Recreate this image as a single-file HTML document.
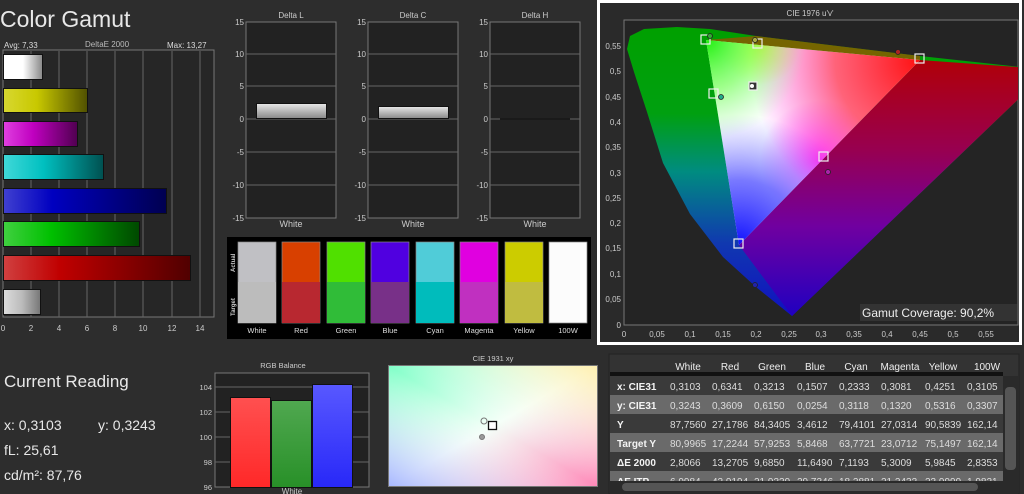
<!DOCTYPE html>
<html><head><meta charset="utf-8"><style>
html,body{margin:0;padding:0;background:#2d2d2d;width:1024px;height:494px;overflow:hidden}
svg{display:block;font-family:"Liberation Sans",sans-serif}
</style></head><body>
<svg width="1024" height="494" viewBox="0 0 1024 494" xmlns="http://www.w3.org/2000/svg">
<defs>
<linearGradient id="gw" x1="0" x2="1"><stop offset="0" stop-color="#fff"/><stop offset=".5" stop-color="#fff"/><stop offset="1" stop-color="#888"/></linearGradient>
<linearGradient id="gy" x1="0" x2="1"><stop offset="0" stop-color="#d8d830"/><stop offset=".4" stop-color="#c8c800"/><stop offset="1" stop-color="#505000"/></linearGradient>
<linearGradient id="gm" x1="0" x2="1"><stop offset="0" stop-color="#e040e0"/><stop offset=".4" stop-color="#c000c0"/><stop offset="1" stop-color="#500050"/></linearGradient>
<linearGradient id="gc" x1="0" x2="1"><stop offset="0" stop-color="#40d8d8"/><stop offset=".4" stop-color="#00c0c0"/><stop offset="1" stop-color="#005050"/></linearGradient>
<linearGradient id="gb" x1="0" x2="1"><stop offset="0" stop-color="#4040d0"/><stop offset=".3" stop-color="#0000c0"/><stop offset="1" stop-color="#000050"/></linearGradient>
<linearGradient id="gg" x1="0" x2="1"><stop offset="0" stop-color="#40d040"/><stop offset=".35" stop-color="#00c000"/><stop offset="1" stop-color="#004800"/></linearGradient>
<linearGradient id="gr" x1="0" x2="1"><stop offset="0" stop-color="#d04040"/><stop offset=".3" stop-color="#c00000"/><stop offset="1" stop-color="#500000"/></linearGradient>
<linearGradient id="gs" x1="0" x2="1"><stop offset="0" stop-color="#ddd"/><stop offset=".5" stop-color="#bbb"/><stop offset="1" stop-color="#777"/></linearGradient>
<linearGradient id="gd" x1="0" y1="0" x2="0" y2="1"><stop offset="0" stop-color="#e8e8e8"/><stop offset="1" stop-color="#888"/></linearGradient>
<linearGradient id="hs" x1="0" y1="0" x2="0" y2="1"><stop offset="0" stop-color="#00a000"/><stop offset=".3" stop-color="#00a010"/><stop offset=".5" stop-color="#008c80"/><stop offset=".75" stop-color="#1038b0"/><stop offset="1" stop-color="#1010c0"/></linearGradient>
<linearGradient id="hr" x1="0" y1="0" x2="0" y2="1"><stop offset="0" stop-color="#b00008"/><stop offset=".35" stop-color="#980050"/><stop offset=".65" stop-color="#7000a0"/><stop offset="1" stop-color="#2000c0"/></linearGradient>
<radialGradient id="tR" cx="920" cy="60" r="170" gradientUnits="userSpaceOnUse"><stop offset="0" stop-color="#ff1010"/><stop offset=".5" stop-color="#ff2040" stop-opacity=".7"/><stop offset="1" stop-color="#ff00ff" stop-opacity="0"/></radialGradient>
<radialGradient id="tG" cx="706" cy="40" r="100" gradientUnits="userSpaceOnUse"><stop offset="0" stop-color="#20f010"/><stop offset=".5" stop-color="#60ff40" stop-opacity=".6"/><stop offset="1" stop-color="#80ff80" stop-opacity="0"/></radialGradient>
<radialGradient id="tB" cx="739" cy="245" r="130" gradientUnits="userSpaceOnUse"><stop offset="0" stop-color="#1010ff"/><stop offset=".5" stop-color="#4040ff" stop-opacity=".7"/><stop offset="1" stop-color="#8080ff" stop-opacity="0"/></radialGradient>
<radialGradient id="tM" cx="820" cy="160" r="60" gradientUnits="userSpaceOnUse"><stop offset="0" stop-color="#ff10ff" stop-opacity=".8"/><stop offset="1" stop-color="#ff40ff" stop-opacity="0"/></radialGradient>
<radialGradient id="tY" cx="760" cy="45" r="40" gradientUnits="userSpaceOnUse"><stop offset="0" stop-color="#ffff20" stop-opacity=".8"/><stop offset="1" stop-color="#ffff40" stop-opacity="0"/></radialGradient>
<linearGradient id="c1" x1="0" y1="0" x2="1" y2="1"><stop offset="0" stop-color="#80ffc8"/><stop offset=".5" stop-color="#f4fff8"/><stop offset="1" stop-color="#ff88b8"/></linearGradient>
<linearGradient id="c2" x1="1" y1="0" x2="0" y2="1"><stop offset="0" stop-color="#fff0b0"/><stop offset=".5" stop-color="#ffffff" stop-opacity="0"/><stop offset="1" stop-color="#a8b8ff"/></linearGradient>
<linearGradient id="rb" x1="0" y1="0" x2="0" y2="1"><stop offset="0" stop-color="#ff5050"/><stop offset="1" stop-color="#ff2828"/></linearGradient>
<linearGradient id="gbb" x1="0" y1="0" x2="0" y2="1"><stop offset="0" stop-color="#50a850"/><stop offset="1" stop-color="#289028"/></linearGradient>
<linearGradient id="bb" x1="0" y1="0" x2="0" y2="1"><stop offset="0" stop-color="#5858ff"/><stop offset="1" stop-color="#2828f8"/></linearGradient>
<clipPath id="cp"><rect x="624" y="20" width="394" height="305"/></clipPath>
<clipPath id="tc"><rect x="610" y="471" width="393" height="10"/></clipPath>
</defs>

<text x="0" y="27" font-size="23" fill="#e8e8e8">Color Gamut</text>
<text x="4" y="48" font-size="8" fill="#ddd">Avg: 7,33</text>
<text x="85" y="47" font-size="8" fill="#bbb">DeltaE 2000</text>
<text x="167" y="48" font-size="8" fill="#ddd">Max: 13,27</text>
<rect x="3" y="50" width="211" height="267" fill="#262626" stroke="#777" stroke-width="1"/>
<g stroke="#666" stroke-width="1">
<line x1="31" y1="51" x2="31" y2="317"/><line x1="59" y1="51" x2="59" y2="317"/><line x1="87" y1="51" x2="87" y2="317"/><line x1="115" y1="51" x2="115" y2="317"/><line x1="143" y1="51" x2="143" y2="317"/><line x1="172" y1="51" x2="172" y2="317"/><line x1="200" y1="51" x2="200" y2="317"/>
</g>
<g stroke="#111" stroke-width="1">
<rect x="3.5" y="54.5" width="39" height="25" fill="url(#gw)"/>
<rect x="3.5" y="88.5" width="84" height="24" fill="url(#gy)"/>
<rect x="3.5" y="121.5" width="74" height="25" fill="url(#gm)"/>
<rect x="3.5" y="154.5" width="100" height="25" fill="url(#gc)"/>
<rect x="3.5" y="188.5" width="163" height="25" fill="url(#gb)"/>
<rect x="3.5" y="221.5" width="136" height="25" fill="url(#gg)"/>
<rect x="3.5" y="255.5" width="187" height="25" fill="url(#gr)"/>
<rect x="3.5" y="289.5" width="37" height="25" fill="url(#gs)"/>
</g>
<g font-size="8" fill="#ccc" text-anchor="middle">
<text x="3" y="331">0</text><text x="31" y="331">2</text><text x="59" y="331">4</text><text x="87" y="331">6</text><text x="115" y="331">8</text><text x="143" y="331">10</text><text x="172" y="331">12</text><text x="200" y="331">14</text>
</g>

<g font-size="8" fill="#ccc">
<g>
<text x="291" y="18" text-anchor="middle">Delta L</text>
<rect x="246" y="22" width="90" height="196" fill="#222" stroke="#777"/>
<g stroke="#666"><line x1="246" y1="54" x2="336" y2="54"/><line x1="246" y1="86" x2="336" y2="86"/><line x1="246" y1="119" x2="336" y2="119"/><line x1="246" y1="152" x2="336" y2="152"/><line x1="246" y1="185" x2="336" y2="185"/></g>
<g text-anchor="end"><text x="244" y="25">15</text><text x="244" y="57">10</text><text x="244" y="89">5</text><text x="244" y="122">0</text><text x="244" y="155">-5</text><text x="244" y="188">-10</text><text x="244" y="221">-15</text></g>
<rect x="256.5" y="103.5" width="70" height="15" fill="url(#gd)" stroke="#111"/>
<text x="291" y="227" text-anchor="middle" font-size="9">White</text>
</g>
<g transform="translate(122,0)">
<text x="291" y="18" text-anchor="middle">Delta C</text>
<rect x="246" y="22" width="90" height="196" fill="#222" stroke="#777"/>
<g stroke="#666"><line x1="246" y1="54" x2="336" y2="54"/><line x1="246" y1="86" x2="336" y2="86"/><line x1="246" y1="119" x2="336" y2="119"/><line x1="246" y1="152" x2="336" y2="152"/><line x1="246" y1="185" x2="336" y2="185"/></g>
<g text-anchor="end"><text x="244" y="25">15</text><text x="244" y="57">10</text><text x="244" y="89">5</text><text x="244" y="122">0</text><text x="244" y="155">-5</text><text x="244" y="188">-10</text><text x="244" y="221">-15</text></g>
<rect x="256.5" y="106.5" width="70" height="12" fill="url(#gd)" stroke="#111"/>
<text x="291" y="227" text-anchor="middle" font-size="9">White</text>
</g>
<g transform="translate(244,0)">
<text x="291" y="18" text-anchor="middle">Delta H</text>
<rect x="246" y="22" width="90" height="196" fill="#222" stroke="#777"/>
<g stroke="#666"><line x1="246" y1="54" x2="336" y2="54"/><line x1="246" y1="86" x2="336" y2="86"/><line x1="246" y1="119" x2="336" y2="119"/><line x1="246" y1="152" x2="336" y2="152"/><line x1="246" y1="185" x2="336" y2="185"/></g>
<line x1="256" y1="119" x2="326" y2="119" stroke="#111"/>
<g text-anchor="end"><text x="244" y="25">15</text><text x="244" y="57">10</text><text x="244" y="89">5</text><text x="244" y="122">0</text><text x="244" y="155">-5</text><text x="244" y="188">-10</text><text x="244" y="221">-15</text></g>
<text x="291" y="227" text-anchor="middle" font-size="9">White</text>
</g>
</g>

<rect x="227" y="237" width="364" height="102" fill="#000"/>
<g font-size="6" fill="#ccc" font-weight="bold"><text transform="translate(235,272) rotate(-90)">Actual</text><text transform="translate(235,316) rotate(-90)">Target</text></g>
<g stroke="#888" stroke-width="0.7">
<rect x="238" y="242" width="38" height="81" fill="#c0c0c4"/><rect x="238" y="282" width="38" height="41" fill="#bcbcbc" stroke="none"/>
<rect x="282" y="242" width="38" height="81" fill="#d84000"/><rect x="282" y="282" width="38" height="41" fill="#b82830" stroke="none"/>
<rect x="327" y="242" width="38" height="81" fill="#50e000"/><rect x="327" y="282" width="38" height="41" fill="#30bc38" stroke="none"/>
<rect x="371" y="242" width="38" height="81" fill="#5000e0"/><rect x="371" y="282" width="38" height="41" fill="#783088" stroke="none"/>
<rect x="416" y="242" width="38" height="81" fill="#50ccd8"/><rect x="416" y="282" width="38" height="41" fill="#00bcbc" stroke="none"/>
<rect x="460" y="242" width="38" height="81" fill="#e000e0"/><rect x="460" y="282" width="38" height="41" fill="#c030c0" stroke="none"/>
<rect x="505" y="242" width="38" height="81" fill="#cccc00"/><rect x="505" y="282" width="38" height="41" fill="#c0bc40" stroke="none"/>
<rect x="549" y="242" width="38" height="81" fill="#fcfcfc"/>
</g>
<g font-size="7.5" fill="#ddd" text-anchor="middle">
<text x="257" y="333">White</text><text x="301" y="333">Red</text><text x="346" y="333">Green</text><text x="390" y="333">Blue</text><text x="435" y="333">Cyan</text><text x="479" y="333">Magenta</text><text x="524" y="333">Yellow</text><text x="568" y="333">100W</text>
</g>

<rect x="598.5" y="1.5" width="422" height="342" fill="#2a2a2a" stroke="#fff" stroke-width="3"/>
<text x="810" y="16" font-size="8" fill="#ccc" text-anchor="middle">CIE 1976 u'v'</text>
<rect x="624" y="20" width="394" height="305" fill="#242424" stroke="#777"/>
<g clip-path="url(#cp)">
<path d="M792,316 L756,287 L723,257 L690,214 L663,163 L647,112 L634,72 L627,49 L630,36 L644,29 L677,27 L710,29 L756,36 L821,44 L920,56 L1030,68 L1030,88 Z" fill="url(#hs)"/>
<path d="M792,316 L739,245 L920,60 L1030,68 L1030,88 Z" fill="url(#hr)"/>
<path d="M706,40 L756,36 L821,44 L920,56 L920,60 Z" fill="#8a5a00" opacity=".85"/>
<polygon points="706,40 920,60 739,245" fill="#fff"/>
<polygon points="706,40 920,60 739,245" fill="url(#tM)"/>
<polygon points="706,40 920,60 739,245" fill="url(#tY)"/>
<polygon points="706,40 920,60 739,245" fill="url(#tB)"/>
<polygon points="706,40 920,60 739,245" fill="url(#tR)"/>
<polygon points="706,40 920,60 739,245" fill="url(#tG)"/>
</g>
<g fill="none" stroke="#eee" stroke-width="1.2">
<rect x="701" y="35" width="9" height="9"/><rect x="753" y="39" width="9" height="9"/><rect x="915" y="54" width="9" height="9"/><rect x="709" y="89" width="9" height="9"/><rect x="819" y="152" width="9" height="9"/><rect x="734" y="239" width="9" height="9"/>
<rect x="749" y="82" width="8" height="8" fill="#333"/>
</g>
<circle cx="752" cy="86" r="2" fill="#fff"/>
<g stroke="#222" stroke-width="0.8"><circle cx="710" cy="36" r="2.5" fill="#3a3"/><circle cx="755" cy="40" r="2.5" fill="#aa4"/><circle cx="898" cy="52" r="2.5" fill="#a22"/><circle cx="721" cy="97" r="2.5" fill="#2a8"/><circle cx="828" cy="172" r="2.5" fill="#a2a"/><circle cx="755" cy="285" r="2.5" fill="#22a"/></g>
<g font-size="8" fill="#ccc" text-anchor="end">
<text x="621" y="49">0,55</text><text x="621" y="74">0,5</text><text x="621" y="100">0,45</text><text x="621" y="125">0,4</text><text x="621" y="150">0,35</text><text x="621" y="176">0,3</text><text x="621" y="201">0,25</text><text x="621" y="226">0,2</text><text x="621" y="251">0,15</text><text x="621" y="277">0,1</text><text x="621" y="302">0,05</text><text x="621" y="328">0</text>
</g>
<g font-size="8" fill="#ccc" text-anchor="middle">
<text x="624" y="337">0</text><text x="657" y="337">0,05</text><text x="690" y="337">0,1</text><text x="723" y="337">0,15</text><text x="756" y="337">0,2</text><text x="789" y="337">0,25</text><text x="821" y="337">0,3</text><text x="854" y="337">0,35</text><text x="887" y="337">0,4</text><text x="920" y="337">0,45</text><text x="953" y="337">0,5</text><text x="986" y="337">0,55</text>
</g>
<rect x="860" y="304" width="157" height="17" fill="#333"/>
<text x="862" y="317" font-size="12" fill="#eee">Gamut Coverage:  90,2%</text>

<text x="4" y="387" font-size="17" fill="#e8e8e8">Current Reading</text>
<g font-size="14" fill="#e8e8e8">
<text x="4" y="430">x: 0,3103</text><text x="98" y="430">y: 0,3243</text>
<text x="4" y="455">fL: 25,61</text>
<text x="4" y="480">cd/m²: 87,76</text>
</g>

<text x="283" y="368" font-size="7.5" fill="#ccc" text-anchor="middle">RGB Balance</text>
<rect x="215" y="373" width="154" height="114" fill="#222" stroke="#777"/>
<g stroke="#666"><line x1="215" y1="387" x2="369" y2="387"/><line x1="215" y1="412" x2="369" y2="412"/><line x1="215" y1="437" x2="369" y2="437"/><line x1="215" y1="462" x2="369" y2="462"/></g>
<g font-size="7.5" fill="#ccc" text-anchor="end"><text x="212" y="390">104</text><text x="212" y="415">102</text><text x="212" y="440">100</text><text x="212" y="465">98</text><text x="212" y="490">96</text></g>
<g stroke="#111"><rect x="230.5" y="397.5" width="40" height="90" fill="url(#rb)"/><rect x="271.5" y="400.5" width="40" height="87" fill="url(#gbb)"/><rect x="312.5" y="384.5" width="40" height="103" fill="url(#bb)"/></g>
<text x="292" y="494" font-size="8" fill="#ccc" text-anchor="middle">White</text>

<text x="493" y="361" font-size="7.5" fill="#ccc" text-anchor="middle">CIE 1931 xy</text>
<rect x="388.5" y="365.5" width="209" height="121" fill="url(#c1)" stroke="#777"/>
<rect x="389" y="366" width="208" height="120" fill="url(#c2)"/>
<circle cx="484" cy="421" r="3" fill="none" stroke="#777"/>
<rect x="488.5" y="421.5" width="8" height="8" fill="#fff" stroke="#111" stroke-width="1.3"/>
<circle cx="482" cy="437" r="2.5" fill="#999" stroke="#777"/>

<rect x="609" y="354" width="410" height="140" fill="#333" stroke="#222"/>
<rect x="610" y="372" width="393" height="4" fill="#111"/>
<rect x="610" y="376" width="393" height="19" fill="#3a3a3a"/>
<rect x="610" y="395" width="393" height="19" fill="#6a6a6a"/>
<rect x="610" y="414" width="393" height="19" fill="#3a3a3a"/>
<rect x="610" y="433" width="393" height="19" fill="#6a6a6a"/>
<rect x="610" y="452" width="393" height="19" fill="#3a3a3a"/>
<rect x="610" y="471" width="393" height="10" fill="#6a6a6a"/>
<g clip-path="url(#tc)" font-size="10" fill="#ddd">
<text x="617" y="485" font-weight="bold" fill="#f4f4f4">ΔE ITP</text><text x="670" y="485">6,9984</text><text x="712" y="485">42,9194</text><text x="754" y="485">21,9339</text><text x="797" y="485">29,7346</text><text x="839" y="485">18,2881</text><text x="881" y="485">21,2433</text><text x="925" y="485">23,9999</text><text x="967" y="485">1,9821</text>
</g>
<rect x="610" y="481" width="408" height="12" fill="#2a2a2a"/>
<rect x="622" y="483" width="356" height="8" rx="4" fill="#555"/>
<rect x="1003" y="376" width="15" height="105" fill="#2a2a2a"/>
<rect x="1005" y="387" width="11" height="83" rx="4" fill="#555"/>
<g font-size="10" fill="#eee" text-anchor="middle">
<text x="688" y="370">White</text><text x="730" y="370">Red</text><text x="772" y="370">Green</text><text x="815" y="370">Blue</text><text x="856" y="370">Cyan</text><text x="900" y="370">Magenta</text><text x="943" y="370">Yellow</text><text x="987" y="370">100W</text>
</g>
<g font-size="10" fill="#f4f4f4" font-weight="bold">
<text x="617" y="390">x: CIE31</text><text x="617" y="409">y: CIE31</text><text x="617" y="428">Y</text><text x="617" y="447">Target Y</text><text x="617" y="466">ΔE 2000</text>
</g>
<g font-size="10" fill="#ddd">
<text x="670" y="390">0,3103</text><text x="712" y="390">0,6341</text><text x="754" y="390">0,3213</text><text x="797" y="390">0,1507</text><text x="839" y="390">0,2333</text><text x="881" y="390">0,3081</text><text x="925" y="390">0,4251</text><text x="967" y="390">0,3105</text>
<text x="670" y="409">0,3243</text><text x="712" y="409">0,3609</text><text x="754" y="409">0,6150</text><text x="797" y="409">0,0254</text><text x="839" y="409">0,3118</text><text x="881" y="409">0,1320</text><text x="925" y="409">0,5316</text><text x="967" y="409">0,3307</text>
<text x="670" y="428">87,7560</text><text x="712" y="428">27,1786</text><text x="754" y="428">84,3405</text><text x="797" y="428">3,4612</text><text x="839" y="428">79,4101</text><text x="881" y="428">27,0314</text><text x="925" y="428">90,5839</text><text x="967" y="428">162,14</text>
<text x="670" y="447">80,9965</text><text x="712" y="447">17,2244</text><text x="754" y="447">57,9253</text><text x="797" y="447">5,8468</text><text x="839" y="447">63,7721</text><text x="881" y="447">23,0712</text><text x="925" y="447">75,1497</text><text x="967" y="447">162,14</text>
<text x="670" y="466">2,8066</text><text x="712" y="466">13,2705</text><text x="754" y="466">9,6850</text><text x="797" y="466">11,6490</text><text x="839" y="466">7,1193</text><text x="881" y="466">5,3009</text><text x="925" y="466">5,9845</text><text x="967" y="466">2,8353</text>
</g>
</svg>
</body></html>
